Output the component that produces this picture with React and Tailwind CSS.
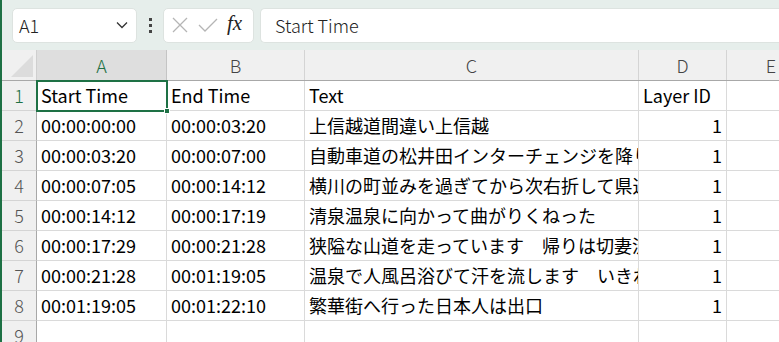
import React from "react";

const rows = [
  ["Start Time", "End Time", "Text", "Layer ID"],
  ["00:00:00:00", "00:00:03:20", "上信越道間違い上信越", "1"],
  ["00:00:03:20", "00:00:07:00", "自動車道の松井田インターチェンジを降り", "1"],
  ["00:00:07:05", "00:00:14:12", "横川の町並みを過ぎてから次右折して県道", "1"],
  ["00:00:14:12", "00:00:17:19", "清泉温泉に向かって曲がりくねった", "1"],
  ["00:00:17:29", "00:00:21:28", "狭隘な山道を走っています　帰りは切妻流", "1"],
  ["00:00:21:28", "00:01:19:05", "温泉で人風呂浴びて汗を流します　いきれ", "1"],
  ["00:01:19:05", "00:01:22:10", "繁華街へ行った日本人は出口", "1"],
  ["", "", "", ""],
];

const font = { fontFamily: '"Noto Sans CJK JP", "Noto Sans", sans-serif' };

export default function App() {
  return (
    <div className="w-[779px] h-[342px] overflow-hidden bg-white flex relative" style={font}>
      <div className="w-[2px] h-full bg-[#1e7145] shrink-0" />
      <div className="flex-1 flex flex-col min-w-0">
        {/* toolbar */}
        <div className="h-[50px] bg-[#e6eeeb] flex items-center pl-[10px] shrink-0">
          <div className="w-[125px] h-[35px] bg-white rounded-[5px] border border-[#dde3e0] flex items-center pl-[6px] pr-[8px]">
            <span className="text-[18px] text-[#222] flex-1 font-light">A1</span>
            <svg width="12" height="8" viewBox="0 0 12 8"><path d="M1 1.5 L6 6.5 L11 1.5" fill="none" stroke="#333" strokeWidth="1.3" /></svg>
          </div>
          <div className="w-[26px] flex flex-col items-center justify-center gap-[3px]">
            <div className="w-[3px] h-[3px] bg-[#444]" />
            <div className="w-[3px] h-[3px] bg-[#444]" />
            <div className="w-[3px] h-[3px] bg-[#444]" />
          </div>
          <div className="w-[91px] h-[35px] bg-white rounded-[5px] border border-[#dde3e0] flex items-center pl-[7px] gap-[9px]">
            <svg width="18" height="18" viewBox="0 0 18 18"><path d="M2 2 L16 16 M16 2 L2 16" stroke="#b5b5b5" strokeWidth="1.3" fill="none" /></svg>
            <svg width="20" height="18" viewBox="0 0 20 18"><path d="M1 9 L7 15 L19 3" stroke="#b5b5b5" strokeWidth="1.3" fill="none" /></svg>
            <span className="text-[21px] italic text-[#222] -mt-[2px]" style={{ fontFamily: '"Liberation Serif", serif' }}>fx</span>
          </div>
          <div className="ml-[6px] flex-1 h-[35px] bg-white rounded-l-[5px] border border-r-0 border-[#dde3e0] flex items-center pl-[14px]">
            <span className="text-[18px] text-[#222] font-light">Start Time</span>
          </div>
        </div>
        {/* column headers */}
        <div className="h-[31px] flex shrink-0 bg-[#f0f0f0] border-b border-[#a8a8a8] text-[18px] text-[#444] font-light">
          <div className="w-[35px] shrink-0 border-r border-[#cfcfcf] relative overflow-hidden">
            <svg className="absolute right-[3px] bottom-[3px]" width="22" height="22" viewBox="0 0 22 22"><path d="M22 0 L22 22 L0 22 Z" fill="#dcdcdc" /></svg>
          </div>
          <div className="w-[130px] shrink-0 bg-[#dedede] border-r border-[#c4c4c4] flex items-center justify-center text-[#1e7145]">A</div>
          <div className="w-[138px] shrink-0 border-r border-[#d4d4d4] flex items-center justify-center">B</div>
          <div className="w-[334px] shrink-0 border-r border-[#d4d4d4] flex items-center justify-center">C</div>
          <div className="w-[88px] shrink-0 border-r border-[#d4d4d4] flex items-center justify-center">D</div>
          <div className="w-[88px] shrink-0 flex items-center justify-center">E</div>
        </div>
        {/* rows */}
        {rows.map((r, i) => (
          <div key={i} className="h-[30px] flex shrink-0 text-[18px] text-black">
            <div className={`w-[35px] shrink-0 bg-[#f0f0f0] border-r border-[#a8a8a8] border-b border-b-[#d4d4d4] flex items-center justify-center font-light ${i === 0 ? "text-[#1e7145]" : "text-[#555]"}`}>{i + 1}</div>
            <div className="w-[130px] shrink-0 border-r border-b border-[#dadada] flex items-center pl-[4px] whitespace-nowrap overflow-hidden">{r[0]}</div>
            <div className="w-[138px] shrink-0 border-r border-b border-[#dadada] flex items-center pl-[4px] whitespace-nowrap overflow-hidden">{r[1]}</div>
            <div className="w-[334px] shrink-0 border-r border-b border-[#dadada] flex items-center pl-[4px] whitespace-nowrap overflow-hidden">{r[2]}</div>
            <div className={`w-[88px] shrink-0 border-r border-b border-[#dadada] flex items-center whitespace-nowrap overflow-hidden ${i === 0 ? "justify-start pl-[4px]" : "justify-end pr-[4px]"}`}>{r[3]}</div>
            <div className="flex-1 border-b border-[#dadada]" />
          </div>
        ))}
      </div>
      {/* selection A1 */}
      <div className="absolute left-[36px] top-[80px] w-[132px] h-[32px] border-2 border-[#1e7145] pointer-events-none">
        <div className="absolute -right-[4px] -bottom-[4px] w-[6px] h-[6px] bg-[#1e7145] border border-white" />
      </div>
    </div>
  );
}
